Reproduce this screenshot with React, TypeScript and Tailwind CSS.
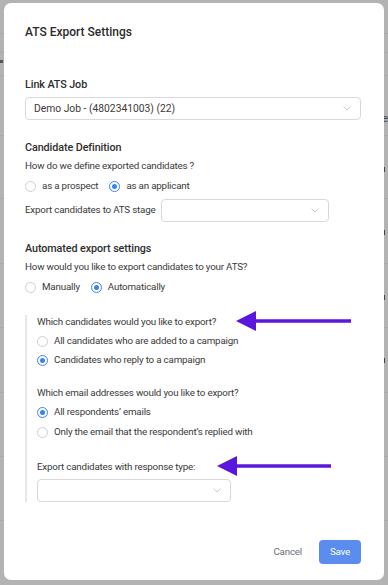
import type { ReactNode } from "react"

const font = { fontFamily: "Roboto, 'Noto Sans', sans-serif" }

function Radio({ checked, label }: { checked?: boolean; label: string }) {
  return (
    <label className="flex items-center gap-[6px] text-[9.8px] tracking-[-0.2px] text-[#3a3a3a]">
      <span
        className={`flex size-[11px] items-center justify-center rounded-full border bg-white ${
          checked ? "border-[#3b82f6]" : "border-[#cfcfcf]"
        }`}
      >
        {checked ? <span className="size-[5px] rounded-full bg-[#3b82f6]" /> : null}
      </span>
      <span>{label}</span>
    </label>
  )
}

function Select({ value, className }: { value?: string; className?: string }) {
  return (
    <div
      className={`flex h-[23px] items-center justify-between rounded-[4px] border border-[#d9d9d9] bg-white pr-[9px] pl-[8px] text-[10.3px] text-[#3a3a3a] ${className ?? ""}`}
    >
      <span>{value}</span>
      <svg width="8" height="5" viewBox="0 0 8 5" fill="none">
        <path d="M0.5 0.5 L4 4 L7.5 0.5" stroke="#c4c4c4" strokeWidth="0.9" />
      </svg>
    </div>
  )
}

function Line({ children, className }: { children: ReactNode; className?: string }) {
  return <div className={`flex h-[18px] items-center ${className ?? ""}`}>{children}</div>
}

function Arrow({ tip, end, y }: { tip: number; end: number; y: number }) {
  return (
    <svg className="pointer-events-none absolute top-0 left-0" width="388" height="585">
      <line x1={tip + 15} y1={y} x2={end} y2={y} stroke="#5a16dc" strokeWidth="3.5" />
      <polygon points={`${tip},${y} ${tip + 20},${y - 10} ${tip + 20},${y + 10}`} fill="#5a16dc" />
    </svg>
  )
}

const body = "text-[9.8px] tracking-[-0.2px] text-[#3a3a3a]"

export default function App() {
  const rows = [33, 52, 75, 135, 198, 263, 327, 392, 456, 520]
  return (
    <div className="relative h-[585px] w-[388px] overflow-hidden bg-[#b3b3b3]" style={font}>
      {/* table behind the overlay */}
      {rows.map((y) => (
        <div key={y} className="absolute left-0 h-px w-full bg-[#a9a9a9]" style={{ top: y }} />
      ))}
      <div className="absolute top-[60px] left-0 h-[3px] w-[3px] bg-[#555]" />
      {[167, 230, 295, 358].map((y) => (
        <div key={y} className="absolute right-[3px] h-[5px] w-px bg-[#444]" style={{ top: y }} />
      ))}
      <span className="absolute top-[111px] right-0 text-[11px] text-[#444]">e</span>

      <div className="absolute top-[3px] left-[4px] flex h-[577px] w-[380px] flex-col rounded-[7px] bg-white pt-[20px] pr-[23px] pl-[21px] text-[#2e2e2e]">
        <div className="flex h-[18px] items-center text-[12px] font-medium text-[#2b2b2b]">
          ATS Export Settings
        </div>

        <Line className="mt-[35px] text-[10.8px] font-medium tracking-[-0.1px]">Link ATS Job</Line>
        <Select className="mt-[3px]" value="Demo Job - (4802341003) (22)" />

        <Line className="mt-[19px] text-[10.8px] font-medium tracking-[-0.1px]">Candidate Definition</Line>
        <Line className={body}>How do we define exported candidates ?</Line>
        <div className="mt-[2px] flex h-[18px] items-center gap-[11px]">
          <Radio label="as a prospect" />
          <Radio checked label="as an applicant" />
        </div>
        <div className="mt-[4px] flex items-center gap-[6px]">
          <span className={body}>Export candidates to ATS stage</span>
          <Select className="w-[168px]" />
        </div>

        <Line className="mt-[18px] text-[10.8px] font-medium tracking-[-0.1px]">Automated export settings</Line>
        <Line className={body}>How would you like to export candidates to your ATS?</Line>
        <div className="mt-[2px] flex h-[18px] items-center gap-[11px]">
          <Radio label="Manually" />
          <Radio checked label="Automatically" />
        </div>

        <div className="mt-[19px] flex flex-col border-l-2 border-[#e8e8e8] pl-[10px]">
          <div className={`flex h-[14px] items-center ${body}`}>Which candidates would you like to export?</div>
          <Line className="mt-[3px]">
            <Radio label="All candidates who are added to a campaign" />
          </Line>
          <Line className="mt-[1px]">
            <Radio checked label="Candidates who reply to a campaign" />
          </Line>

          <Line className={`mt-[15px] ${body}`}>Which email addresses would you like to export?</Line>
          <Line className="mt-[1px]">
            <Radio checked label="All respondents’ emails" />
          </Line>
          <Line className="mt-[2px]">
            <Radio label="Only the email that the respondent’s replied with" />
          </Line>

          <Line className={`mt-[17px] ${body}`}>Export candidates with response type:</Line>
          <Select className="mt-[3px] w-[194px]" />
        </div>

        <div className="mt-[38px] flex items-center justify-end gap-[17px]">
          <button className="text-[9.8px] tracking-[-0.2px] text-[#6b6f78]">Cancel</button>
          <button className="h-[24px] w-[42px] rounded-[4px] bg-[#5b8def] text-[9.8px] tracking-[-0.2px] text-white">
            Save
          </button>
        </div>
      </div>

      <Arrow tip={236} end={351} y={321} />
      <Arrow tip={217} end={331} y={466} />
    </div>
  )
}
